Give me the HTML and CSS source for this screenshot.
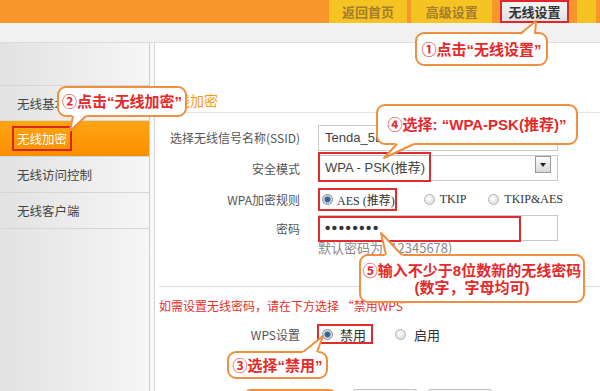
FILE: index.html
```html
<!DOCTYPE html>
<html lang="zh-CN">
<head>
    <meta charset="UTF-8">
    <meta name="viewport" content="width=device-width, initial-scale=1.0">
    <title>无线加密 - Tenda</title>
    <link rel="stylesheet" href="styles.css">
</head>
<body>
    <div class="page">
        <div class="topbar">
            <div class="tab">返回首页</div>
            <div class="tab tab-wide">高级设置</div>
            <div class="tab active">无线设置</div>
            <div class="tab stub"></div>
        </div>
        <div class="subbar"></div>

        <div class="frame">
            <ul class="sidebar">
                <li class="side-item">无线基本设置</li>
                <li class="side-item on"><span class="side-mark">无线加密</span></li>
                <li class="side-item">无线访问控制</li>
                <li class="side-item">无线客户端</li>
            </ul>
            <div class="gutter"></div>

            <div class="main">
                <h2 class="title">无线加密</h2>

                <div class="form">
                    <label class="label">选择无线信号名称(SSID)</label>
                    <div class="select">Tenda_5E2B40<span class="drop"></span></div>

                    <label class="label">安全模式</label>
                    <div class="select">
                        <span class="hl hl-mode"></span>
                        WPA - PSK(推荐)<span class="drop"></span>
                    </div>

                    <label class="label">WPA加密规则</label>
                    <div class="options">
                        <span class="opt boxed"><i class="radio checked"></i>AES (推荐)</span>
                        <span class="opt opt-tkip"><i class="radio"></i>TKIP</span>
                        <span class="opt opt-both"><i class="radio"></i>TKIP&amp;AES</span>
                    </div>

                    <label class="label">密码</label>
                    <div class="input">
                        <span class="hl hl-pass"></span>
                        <span class="dots">••••••••</span>
                    </div>

                    <span></span>
                    <div class="hint">默认密码为 (12345678)</div>
                </div>

                <div class="divider"></div>
                <p class="warn">如需设置无线密码，请在下方选择 “禁用WPS”</p>

                <div class="form form-wps">
                    <label class="label">WPS设置</label>
                    <div class="options">
                        <span class="opt boxed boxed-wps"><i class="radio checked"></i>禁用</span>
                        <span class="opt opt-on"><i class="radio"></i>启用</span>
                    </div>
                </div>

                <!-- only the top edge of the button row shows -->
                <div class="actions">
                    <div class="note-box"></div>
                    <div class="btn"></div>
                    <div class="btn"></div>
                </div>
            </div>
        </div>

        <!-- step callouts -->
        <div class="callout c1">①点击“无线设置”</div>
        <div class="callout c2">②点击“无线加密”</div>
        <div class="callout c3">③选择“禁用”</div>
        <div class="callout c4">④选择: “WPA-PSK(推荐)”</div>
        <div class="callout c5">⑤输入不少于8位数新的无线密码<br>(数字，字母均可)</div>

        <svg class="tails" width="600" height="391" viewBox="0 0 600 391">
            <g fill="#fff" stroke="none">
                <polygon points="520,36 536,21 535,36"/>
                <polygon points="72,115 70,131 87,115"/>
                <polygon points="302,353 323,336 318,353"/>
                <polygon points="396,143 384,158 415,143"/>
                <polygon points="385,256 381,233 403,256"/>
            </g>
            <g fill="none" stroke="#ef8f3f" stroke-width="2" stroke-linejoin="round">
                <polyline points="520,34 536,21 535,34"/>
                <polyline points="73,116 70,131 86,116"/>
                <polyline points="303,352 323,336 317,352"/>
                <polyline points="397,144 384,158 414,144"/>
                <polyline points="386,255 381,233 402,255"/>
            </g>
        </svg>
    </div>
</body>
</html>
```

FILE: styles.css
```css
* {
    box-sizing: border-box;
}

body {
    margin: 0;
    font-family: "Noto Sans CJK SC", sans-serif;
    background: #fff;
}

.page {
    position: relative;
    width: 600px;
    height: 391px;
    overflow: hidden;
}

/* top navigation */
.topbar {
    height: 23px;
    display: flex;
    padding-left: 329px;
    background: #f7962b;
}

.tab {
    width: 82px;
    margin-right: 4px;
    background: #f5c322;
    color: #a47d2e;
    font: bold 13px/23px "Noto Sans CJK SC", sans-serif;
    text-align: center;
}

.tab-wide {
    width: 85px;
    margin-right: 8px;
}

.tab.active {
    width: 72px;
    margin-right: 8px;
    background: linear-gradient(#f4f4f4, #e2e2e2);
    color: #333;
    border: 2px solid #e0262a;
    line-height: 19px;
}

.tab.stub {
    width: 20px;
}

.subbar {
    height: 20px;
    background: #f1f1f1;
    border-bottom: 1px solid #dcdcdc;
}

.frame {
    display: flex;
    height: 348px;
}

/* left menu */
.sidebar {
    width: 150px;
    margin: 0;
    padding: 42px 0 0;
    list-style: none;
    background: linear-gradient(to right, #e2e2e2, #f6f6f6);
    border-right: 1px solid #cdcdcd;
}

.side-item {
    height: 36px;
    padding-left: 17px;
    font-size: 12.5px;
    line-height: 35px;
    color: #444;
    border-bottom: 1px solid #d6d6d6;
}

.side-item:first-child {
    border-top: 1px solid #d6d6d6;
}

.side-item.on {
    background: linear-gradient(#ffa514, #f98e00);
    color: #fff;
}

.side-mark {
    margin-left: -5px;
    padding: 1px 3px;
    border: 2px solid #d8281c;
}

.gutter {
    width: 5px;
    background: #f9f9f9;
    border-right: 1px solid #d4d4d4;
}

/* content */
.main {
    flex: 1;
    background: #fff;
}

.title {
    height: 70px;
    margin: 0;
    padding: 48px 0 0 7px;
    font-size: 14px;
    font-weight: normal;
    line-height: 18px;
    color: #f39b20;
    border-bottom: 1px solid #e4e4e4;
}

.form {
    display: grid;
    grid-template-columns: 145px 240px;
    grid-template-rows: 29px 32px 31px 26px 14px;
    column-gap: 18px;
    align-items: center;
    margin-top: 10px;
}

.label {
    text-align: right;
    font-size: 12px;
    color: #555;
    white-space: nowrap;
}

.select,
.input {
    position: relative;
    height: 26px;
    padding-left: 6px;
    border: 1px solid #c9c9c9;
    font: 13px/24px "Liberation Sans", "Noto Sans CJK SC", sans-serif;
    color: #444;
}

.drop {
    position: absolute;
    right: 6px;
    top: 0;
    width: 16px;
    height: 17px;
    border: 1px solid #9a9a9a;
    background: linear-gradient(#fdfdfd, #d8d8d8);
}

.drop::after {
    content: "";
    position: absolute;
    left: 4px;
    top: 6px;
    border-left: 3px solid transparent;
    border-right: 3px solid transparent;
    border-top: 4px solid #222;
}

.hl {
    position: absolute;
    border: 2px solid #e02c2c;
}

.hl-mode {
    left: -1px;
    top: -4px;
    width: 113px;
    height: 30px;
}

.hl-pass {
    left: -1px;
    top: 0;
    width: 203px;
    height: 26px;
}

.dots {
    font: bold 15px/24px "Liberation Sans", sans-serif;
    letter-spacing: 1.6px;
    color: #333;
}

.options {
    display: flex;
    align-items: center;
    font: 12px "Liberation Serif", "Noto Sans CJK SC", serif;
    color: #333;
    white-space: nowrap;
}

.opt {
    display: flex;
    align-items: center;
    gap: 5px;
}

.opt-tkip {
    margin-left: 27px;
}

.opt-both {
    margin-left: 22px;
}

.boxed {
    height: 23px;
    width: 79px;
    padding-left: 2px;
    gap: 4px;
    border: 2px solid #e02c2c;
}

.radio {
    flex: none;
    width: 11px;
    height: 11px;
    border-radius: 50%;
    border: 1px solid #b4b4b4;
    background: radial-gradient(circle at 40% 40%, #fff, #d4d4d4);
}

.radio.checked {
    border-color: #8c8c8c;
    background: radial-gradient(circle, #2b5a8c 0, #3d6f9f 2.5px, #c9d2dc 3.5px, #eaeaea 5px);
}

.hint {
    font-size: 13px;
    line-height: 14px;
    color: #888;
    white-space: nowrap;
}

.divider {
    height: 1px;
    margin: 31px 0 0 4px;
    background: #dcdcdc;
}

.warn {
    margin: 11px 0 0 4px;
    font-size: 12px;
    line-height: 16px;
    color: #e8302a;
}

.form-wps {
    grid-template-rows: 22px;
    margin-top: 9px;
}

.form-wps .options {
    font: 13px "Noto Sans CJK SC", sans-serif;
}

.boxed-wps {
    width: 56px;
    height: 20px;
    margin-left: -1px;
    padding-left: 3px;
    gap: 7px;
}

.opt-on {
    margin-left: 22px;
    gap: 8px;
}

.actions {
    display: flex;
    margin-top: 44px;
    padding-left: 88px;
}

.note-box {
    width: 94px;
    height: 30px;
    border: 2px solid #ef8f3f;
    border-radius: 8px;
}

.btn {
    width: 64px;
    height: 26px;
    margin-left: 16px;
    border: 1px solid #c4c4c4;
    border-radius: 2px;
    background: #f7f7f7;
}

.btn + .btn {
    margin-left: 11px;
}

/* annotation callouts */
.callout {
    position: absolute;
    display: flex;
    align-items: center;
    justify-content: center;
    text-align: center;
    background: #fff;
    border: 2px solid #ef8f3f;
    border-radius: 9px;
    color: #e5292b;
    font: bold 15px/17px "Liberation Sans", "Noto Sans CJK SC", sans-serif;
    white-space: nowrap;
}

.c1 {
    left: 415px;
    top: 32px;
    width: 133px;
    height: 34px;
}

.c2 {
    left: 57px;
    top: 86px;
    width: 130px;
    height: 31px;
}

.c3 {
    left: 227px;
    top: 351px;
    width: 101px;
    height: 28px;
}

.c4 {
    left: 376px;
    top: 104px;
    width: 202px;
    height: 41px;
}

.c5 {
    left: 359px;
    top: 254px;
    width: 226px;
    height: 49px;
}

.tails {
    position: absolute;
    left: 0;
    top: 0;
    pointer-events: none;
}
```
